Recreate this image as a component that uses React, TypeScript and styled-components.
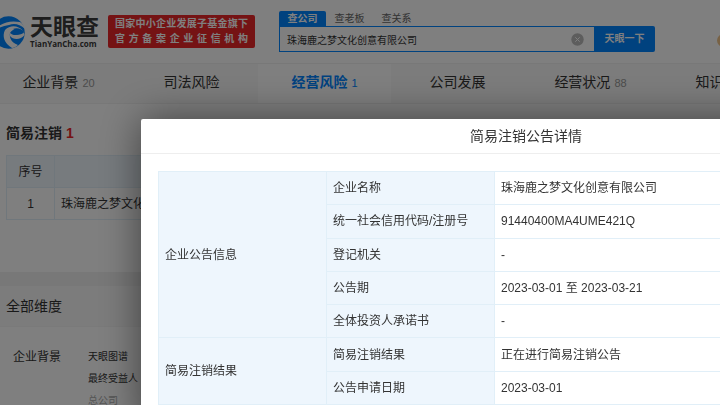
import React from "react";
import styled, { createGlobalStyle } from "styled-components";

const GlobalStyle = createGlobalStyle`
  * { box-sizing: border-box; }
  body {
    margin: 0;
    background: #fff;
    color: #333;
    font: 12px/16px "Liberation Sans", "Noto Sans CJK SC", sans-serif;
  }
  button, input { font: inherit; color: inherit; border: 0; padding: 0; background: none; }
  a { color: inherit; text-decoration: none; }
  h1, h2, p { margin: 0; font-weight: 400; }
`;

const Page = styled.div`
  height: 100vh;
  overflow: hidden;
  white-space: nowrap;
`;

const Header = styled.header`
  display: flex;
  align-items: flex-start;
  height: 64px;
  padding-top: 11px;
  border-bottom: 1px solid #f0f0f0;
`;

const Logo = styled.a`
  display: flex;
  align-items: center;
  gap: 5px;
  margin: 4px 9px 0 -8px;
  color: #3a3a3a;
  svg { display: block; }
`;

const Wordmark = styled.span`
  display: flex;
  flex-direction: column;
  width: 69px;
  font-weight: 700;
`;

const BrandName = styled.span`
  font-size: 23px;
  line-height: 24px;
`;

const Domain = styled.span`
  font-family: "Open Sans", "Liberation Sans", sans-serif;
  font-size: 8px;
  line-height: 10px;
`;

const Banner = styled.p`
  width: 147px;
  margin: 4px 24px 0 0;
  padding: 1px 7px 2px;
  border-radius: 2px;
  background: #ea2629;
  color: #fff;
  font-size: 10px;
  font-weight: 700;
  line-height: 15px;
`;

const BannerLine = styled.span`
  display: block;
  text-align: justify;
  text-align-last: justify;
`;

const Search = styled.form`
  width: 376px;
  font-size: 10px;
`;

const SearchTabs = styled.div`
  display: flex;
`;

const SearchTab = styled.button<{ $active?: boolean }>`
  width: 47px;
  height: 15px;
  line-height: 15px;
  border-radius: 2px 2px 0 0;
  background: ${(p) => (p.$active ? "#0084ff" : "transparent")};
  color: ${(p) => (p.$active ? "#fff" : "#666")};
  font-weight: ${(p) => (p.$active ? 700 : 400)};
`;

const SearchBar = styled.div`
  display: flex;
  height: 26px;
`;

const SearchField = styled.div`
  display: flex;
  flex: 1;
  align-items: center;
  padding: 0 10px 0 7px;
  border: 1px solid #0084ff;
  border-right: 0;
`;

const SearchInput = styled.input`
  flex: 1;
  min-width: 0;
  height: 22px;
  outline: 0;
`;

const ClearButton = styled.button`
  width: 13px;
  height: 13px;
  svg { display: block; }
`;

const SearchButton = styled.button`
  width: 61px;
  border-radius: 0 2px 2px 0;
  background: #0084ff;
  color: #fff;
  font-weight: 700;
`;

const Avatar = styled.span`
  flex: none;
  width: 13px;
  height: 13px;
  margin: 23px -10px 0 auto;
  border-radius: 50%;
  background: #f0c48a;
`;

const Nav = styled.nav`
  display: flex;
  height: 40px;
  margin-left: -8px;
  border-bottom: 1px solid #f0f0f0;
  background: #f8f8f8;
`;

const NavItem = styled.a<{ $active?: boolean }>`
  flex: 0 0 133px;
  text-align: center;
  font-size: 14px;
  line-height: 37px;
  background: ${(p) => (p.$active ? "#fff" : "transparent")};
  color: ${(p) => (p.$active ? "#0084ff" : "#333")};
  font-weight: ${(p) => (p.$active ? 700 : 400)};
`;

const NavCount = styled.small<{ $active?: boolean }>`
  margin-left: 4px;
  font-size: 11px;
  font-weight: 400;
  color: ${(p) => (p.$active ? "#0084ff" : "#999")};
`;

const Section = styled.section`
  height: 168px;
  padding: 19px 6px 0;
`;

const SectionTitle = styled.h2`
  margin-bottom: 12px;
  font-size: 14px;
  line-height: 20px;
  font-weight: 700;
`;

const Accent = styled.span`
  color: #ea2629;
`;

const RecordTable = styled.table`
  width: 100%;
  border-collapse: collapse;
  th, td { height: 32px; padding: 0 6px; border: 1px solid #e1eff8; font-weight: 400; text-align: left; }
  th { background: #eef6fc; }
  th:first-child, td:first-child { width: 48px; text-align: center; }
`;

const Divider = styled.div`
  height: 14px;
  background: #f0f0f0;
`;

const DimensionTitle = styled.h2`
  padding-left: 6px;
  font-size: 14px;
  line-height: 40px;
  border-bottom: 1px solid #f5f5f5;
  background: #f8f8f8;
`;

const Dimension = styled.div`
  display: flex;
  gap: 27px;
  padding: 19px 13px 0;
  line-height: 22px;
`;

const DimensionLinks = styled.div`
  display: flex;
  flex-direction: column;
  font-size: 10px;
`;

const DimensionLink = styled.a<{ $muted?: boolean }>`
  color: ${(p) => (p.$muted ? "#aaa" : "inherit")};
`;

const Shade = styled.div`
  position: fixed;
  inset: 0;
  overflow: hidden;
  background: rgba(0, 0, 0, 0.5);
  white-space: nowrap;
`;

const Dialog = styled.div`
  margin: 119px -191px 0 141px;
  padding-bottom: 24px;
  border-radius: 2px;
  background: #fff;
  box-shadow: 0 0 40px rgba(0, 0, 0, 0.5);
`;

const DialogTitle = styled.h1`
  border-bottom: 1px solid #eee;
  font-size: 14px;
  line-height: 34px;
  text-align: center;
`;

const DetailTable = styled.table`
  width: calc(100% - 34px);
  height: 234px;
  margin: 17px 17px 0;
  border-collapse: collapse;
  table-layout: fixed;
  th, td { padding: 0 6px; border: 1px solid #e1eff8; font-weight: 400; text-align: left; }
  th { width: 168px; background: #eef6fd; }
`;

const navItems = [
  { label: "企业背景", count: 20 },
  { label: "司法风险" },
  { label: "经营风险", count: 1, active: true },
  { label: "公司发展" },
  { label: "经营状况", count: 88 },
  { label: "知识产权" },
];

const groups = [
  {
    title: "企业公告信息",
    rows: [
      ["企业名称", "珠海鹿之梦文化创意有限公司"],
      ["统一社会信用代码/注册号", "91440400MA4UME421Q"],
      ["登记机关", "-"],
      ["公告期", "2023-03-01 至 2023-03-21"],
      ["全体投资人承诺书", "-"],
    ],
  },
  {
    title: "简易注销结果",
    rows: [
      ["简易注销结果", "正在进行简易注销公告"],
      ["公告申请日期", "2023-03-01"],
    ],
  },
];

const LogoMark = () => (
  <svg width="33" height="33" viewBox="0 0 33 33" aria-hidden="true">
    <circle cx="16.5" cy="16.5" r="16.2" fill="#0084ff" />
    <path d="M2 15C8 7 17 4 28 6C31 8 32 10 33 13C28 8 22 7 17 9C11 10 6 12 2 15Z" fill="#fff" />
    <path d="M13 14C18 9 26 9 31 15C25 12 20 13 18 17C17 22 20 27 26 29C24 31 22 32 20 32C12 27 10 20 13 14Z" fill="#fff" />
    <path d="M18 17C21 20 27 20 31 15L32.5 19C29 24 21 24 18 20Z" fill="#fff" />
    <path d="M21 13C25 11 30 13 32 16C30 19 25 20 20 17C24 17 25 15 21 13Z" fill="#0084ff" />
  </svg>
);

export default function App() {
  return (
    <>
      <GlobalStyle />
      <Page>
        <Header>
          <Logo href="#" aria-label="天眼查">
            <LogoMark />
            <Wordmark>
              <BrandName>天眼查</BrandName>
              <Domain>TianYanCha.com</Domain>
            </Wordmark>
          </Logo>
          <Banner>
            <BannerLine>国家中小企业发展子基金旗下</BannerLine>
            <BannerLine>官方备案企业征信机构</BannerLine>
          </Banner>
          <Search>
            <SearchTabs>
              <SearchTab type="button" $active>查公司</SearchTab>
              <SearchTab type="button">查老板</SearchTab>
              <SearchTab type="button">查关系</SearchTab>
            </SearchTabs>
            <SearchBar>
              <SearchField>
                <SearchInput aria-label="查公司" defaultValue="珠海鹿之梦文化创意有限公司" />
                <ClearButton type="button" aria-label="清除">
                  <svg width="13" height="13" viewBox="0 0 13 13">
                    <circle cx="6.5" cy="6.5" r="6.2" fill="#bbb" />
                    <path d="M4.3 4.3l4.4 4.4M8.7 4.3L4.3 8.7" stroke="#fff" />
                  </svg>
                </ClearButton>
              </SearchField>
              <SearchButton type="submit">天眼一下</SearchButton>
            </SearchBar>
          </Search>
          <Avatar />
        </Header>
        <Nav>
          {navItems.map((item) => (
            <NavItem key={item.label} href="#" $active={item.active}>
              {item.label}
              {item.count && <NavCount $active={item.active}>{item.count}</NavCount>}
            </NavItem>
          ))}
        </Nav>
        <Section>
          <SectionTitle>
            简易注销 <Accent>1</Accent>
          </SectionTitle>
          <RecordTable>
            <thead>
              <tr><th>序号</th><th /></tr>
            </thead>
            <tbody>
              <tr><td>1</td><td>珠海鹿之梦文化创意有限公司</td></tr>
            </tbody>
          </RecordTable>
        </Section>
        <Divider />
        <DimensionTitle>全部维度</DimensionTitle>
        <Dimension>
          <span>企业背景</span>
          <DimensionLinks>
            <DimensionLink href="#">天眼图谱</DimensionLink>
            <DimensionLink href="#">最终受益人</DimensionLink>
            <DimensionLink $muted>总公司</DimensionLink>
          </DimensionLinks>
        </Dimension>
      </Page>
      <Shade>
        <Dialog role="dialog" aria-labelledby="notice-title">
          <DialogTitle id="notice-title">简易注销公告详情</DialogTitle>
          <DetailTable>
            <tbody>
              {groups.map((group) =>
                group.rows.map(([label, value], i) => (
                  <tr key={label}>
                    {i === 0 && <th rowSpan={group.rows.length}>{group.title}</th>}
                    <th>{label}</th>
                    <td>{value}</td>
                  </tr>
                ))
              )}
            </tbody>
          </DetailTable>
        </Dialog>
      </Shade>
    </>
  );
}
